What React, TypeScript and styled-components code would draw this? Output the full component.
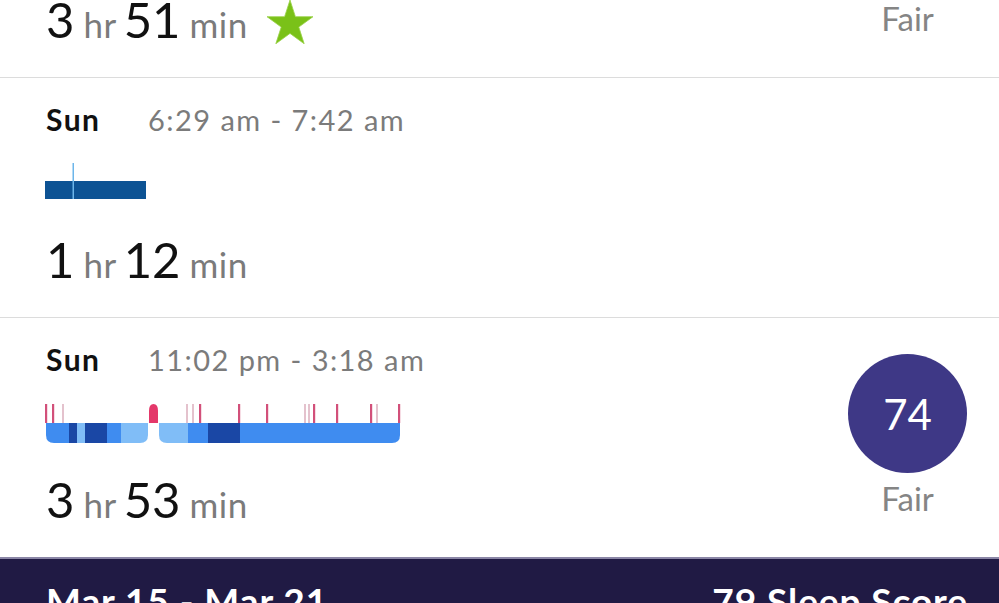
import styled, { createGlobalStyle } from 'styled-components';

const GlobalStyle = createGlobalStyle`
   html, body {
      margin: 0;
      padding: 0;
      background: #ffffff;
      overflow: hidden;
   }
   body {
      font-family: Lato, 'Open Sans', 'Liberation Sans', sans-serif;
      color: #111111;
   }
`;

type Segment = { x: number; w: number; c: string };
type Tick = { x: number; faint?: boolean };

const MEDIUM = '#3f8cf0';
const DARK = '#1a47a5';
const LIGHT = '#80bdf7';

// 11:02 pm - 3:18 am 수면 단계
const nightGroups: { x: number; w: number; segs: Segment[] }[] = [
   {
      x: 1,
      w: 102,
      segs: [
         { x: 1, w: 23, c: MEDIUM },
         { x: 24, w: 8, c: DARK },
         { x: 32, w: 8, c: LIGHT },
         { x: 40, w: 22, c: DARK },
         { x: 62, w: 14, c: MEDIUM },
         { x: 76, w: 27, c: LIGHT },
      ],
   },
   {
      x: 114,
      w: 241,
      segs: [
         { x: 114, w: 29, c: LIGHT },
         { x: 143, w: 20, c: MEDIUM },
         { x: 163, w: 32, c: DARK },
         { x: 195, w: 160, c: MEDIUM },
      ],
   },
];

const nightTicks: Tick[] = [
   { x: 1 },
   { x: 8 },
   { x: 18, faint: true },
   { x: 142, faint: true },
   { x: 148, faint: true },
   { x: 155 },
   { x: 194 },
   { x: 222 },
   { x: 260, faint: true },
   { x: 264, faint: true },
   { x: 269 },
   { x: 292 },
   { x: 326 },
   { x: 332, faint: true },
   { x: 354 },
];

const groupPath = (x: number, w: number) => {
   const r = 8;
   const top = 24;
   const bottom = 44;
   return `M${x} ${top} H${x + w} V${bottom - r} Q${x + w} ${bottom} ${x + w - r} ${bottom} H${x + r} Q${x} ${bottom} ${x} ${bottom - r} Z`;
};

const NapChart = () => (
   <Chart width={102} height={44} viewBox="0 0 102 44">
      <rect x={0} y={22} width={101} height={18} fill="#0d5394" />
      <rect x={27.5} y={4} width={1.5} height={36} fill="#6db6ea" />
   </Chart>
);

const NightChart = () => (
   <Chart width={356} height={44} viewBox="0 0 356 44">
      <defs>
         {nightGroups.map((g, i) => (
            <clipPath id={`night-group-${i}`} key={i}>
               <path d={groupPath(g.x, g.w)} />
            </clipPath>
         ))}
      </defs>
      {nightGroups.map((g, i) => (
         <g clipPath={`url(#night-group-${i})`} key={i}>
            {g.segs.map(s => (
               <rect key={s.x} x={s.x} y={24} width={s.w} height={20} fill={s.c} />
            ))}
         </g>
      ))}
      {nightTicks.map(t => (
         <rect
            key={t.x}
            x={t.x - (t.faint ? 0.6 : 1)}
            y={5}
            width={t.faint ? 1.2 : 2.2}
            height={19}
            fill={t.faint ? '#d39aac' : '#d2507a'}
         />
      ))}
      <path d="M104 24 V12 Q104 5 108.5 5 Q113 5 113 12 V24 Z" fill="#e4386a" />
   </Chart>
);

const Star = () => (
   <StarIcon width={46} height={44} viewBox="0 0 46 44">
      <polygon
         points="23,0 28.4,16.7 46,16.7 31.8,27.1 37.2,43.8 23,33.4 8.8,43.8 14.2,27.1 0,16.7 17.6,16.7"
         fill="#7ac118"
         stroke="#9ad24a"
         strokeWidth={0.8}
         strokeLinejoin="round"
      />
   </StarIcon>
);

const App = () => {
   return (
      <>
         <GlobalStyle />
         <Page>
            <TailRow>
               <Summary>
                  <Duration>
                     3<Unit>hr</Unit>51<Unit>min</Unit>
                     <Star />
                  </Duration>
               </Summary>
               <Grade>
                  <GradeText>Fair</GradeText>
               </Grade>
            </TailRow>

            <Row $divider>
               <Summary>
                  <Header>
                     <Day>Sun</Day>
                     <TimeRange>6:29 am - 7:42 am</TimeRange>
                  </Header>
                  <NapChart />
                  <Duration>
                     1<Unit>hr</Unit>12<Unit>min</Unit>
                  </Duration>
               </Summary>
            </Row>

            <Row>
               <Summary>
                  <Header>
                     <Day>Sun</Day>
                     <TimeRange>11:02 pm - 3:18 am</TimeRange>
                  </Header>
                  <NightChart />
                  <Duration>
                     3<Unit>hr</Unit>53<Unit>min</Unit>
                  </Duration>
               </Summary>
               <Grade>
                  <ScoreCircle>74</ScoreCircle>
                  <GradeText>Fair</GradeText>
               </Grade>
            </Row>

            <WeekBar>
               <WeekText>Mar 15 - Mar 21</WeekText>
               <WeekText>79 Sleep Score</WeekText>
            </WeekBar>
         </Page>
      </>
   );
};
export default App;

const Page = styled.main`
   width: 999px;
   height: 603px;
   overflow: hidden;
   display: flex;
   flex-direction: column;
`;

const Row = styled.section<{ $divider?: boolean }>`
   flex-shrink: 0;
   display: flex;
   justify-content: space-between;
   padding: 25px 32px 30px 46px;
   border-bottom: ${p => (p.$divider ? '1px solid #dcdcdc' : 'none')};
`;

const TailRow = styled(Row)`
   box-sizing: border-box;
   height: 78px;
   padding-top: 0;
   align-items: flex-end;
   overflow: hidden;
   border-bottom: 1px solid #dcdcdc;
`;

const Summary = styled.div`
   display: flex;
   flex-direction: column;
`;

const Header = styled.div`
   display: flex;
   align-items: baseline;
   height: 36px;
   line-height: 36px;
   font-size: 29px;
   margin-top: -2px;
   margin-bottom: 2px;
`;

const Day = styled.span`
   width: 102px;
   font-size: 30px;
   font-weight: 700;
   letter-spacing: 1.5px;
   color: #111111;
`;

const TimeRange = styled.span`
   color: #7b7b7b;
   letter-spacing: 0.05em;
`;

const Chart = styled.svg`
   display: block;
   margin-top: 20px;
   margin-left: -1px;
`;

const Duration = styled.div`
   margin-top: 28px;
   height: 56px;
   font-size: 49px;
   line-height: 56px;
   color: #111111;
   white-space: nowrap;
`;

const Unit = styled.span`
   font-size: 35px;
   letter-spacing: 0.5px;
   color: #7b7b7b;
   margin: 0 7px 0 9px;
`;

const StarIcon = styled.svg`
   vertical-align: -6px;
   margin-left: 12px;
`;

const Grade = styled.div`
   width: 119px;
   display: flex;
   flex-direction: column;
   align-items: center;
   justify-content: flex-end;
   gap: 6px;
   padding-bottom: 10px;
`;

const ScoreCircle = styled.div`
   width: 119px;
   height: 119px;
   border-radius: 50%;
   background: #3e3886;
   color: #ffffff;
   display: flex;
   align-items: center;
   justify-content: center;
   font-size: 42px;
   font-weight: 400;
`;

const GradeText = styled.span`
   font-size: 33px;
   line-height: 38px;
   color: #858585;
`;

const WeekBar = styled.footer`
   flex: 1;
   display: flex;
   justify-content: space-between;
   padding: 22px 31px 0 46px;
   background: #201a44;
   border-top: 2px solid #8a86a6;
`;

const WeekText = styled.span`
   font-size: 37px;
   line-height: 40px;
   font-weight: 700;
   letter-spacing: 0.025em;
   color: #ffffff;
`;
